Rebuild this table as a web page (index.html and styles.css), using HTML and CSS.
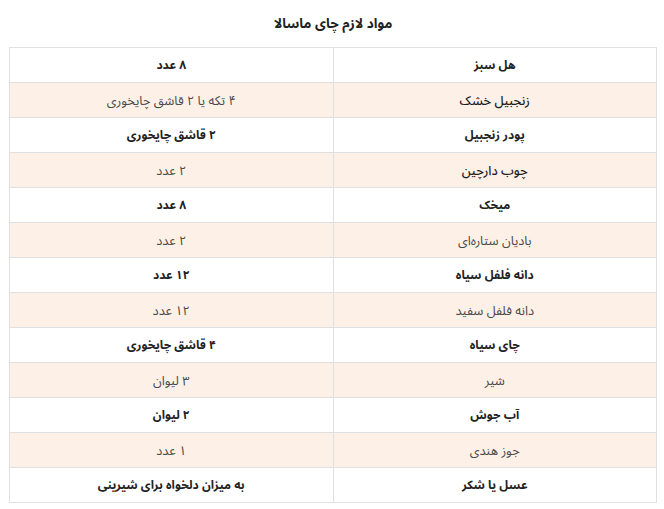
FILE: index.html
```html
<!DOCTYPE html>
<html lang="fa" dir="rtl">
<head>
<meta charset="utf-8">
<link rel="stylesheet" href="styles.css">
</head>
<body>
<div class="wrap">
  <h2 class="title">مواد لازم چای ماسالا</h2>
  <table class="recipe">
    <tbody>
      <tr class="b"><td>هل سبز</td><td>۸ عدد</td></tr>
      <tr class="p"><td class="dk">زنجبیل خشک</td><td>۴ تکه یا ۲ قاشق چایخوری</td></tr>
      <tr class="b"><td>پودر زنجبیل</td><td>۲ قاشق چایخوری</td></tr>
      <tr class="p"><td class="dk">چوب دارچین</td><td>۲ عدد</td></tr>
      <tr class="b"><td>میخک</td><td>۸ عدد</td></tr>
      <tr class="p"><td>بادیان ستاره‌ای</td><td>۲ عدد</td></tr>
      <tr class="b"><td>دانه فلفل سیاه</td><td>۱۲ عدد</td></tr>
      <tr class="p"><td>دانه فلفل سفید</td><td>۱۲ عدد</td></tr>
      <tr class="b"><td>چای سیاه</td><td>۴ قاشق چایخوری</td></tr>
      <tr class="p"><td>شیر</td><td>۳ لیوان</td></tr>
      <tr class="b"><td>آب جوش</td><td>۲ لیوان</td></tr>
      <tr class="p"><td>جوز هندی</td><td>۱ عدد</td></tr>
      <tr class="b"><td>عسل یا شکر</td><td>به میزان دلخواه برای شیرینی</td></tr>
    </tbody>
  </table>
</div>
</body>
</html>
```
FILE: styles.css
```css
html, body {
  margin: 0;
  padding: 0;
  background: #ffffff;
}
body {
  font-family: "Noto Sans Arabic", "DejaVu Sans", sans-serif;
  color: #222222;
}
.wrap {
  padding: 0 7px 0 9px;
}
.title {
  margin: 0;
  height: 47px;
  line-height: 48px;
  font-size: 13.5px;
  font-weight: bold;
  text-align: center;
  color: #222222;
}
.recipe {
  width: 648px;
  border-collapse: collapse;
  table-layout: fixed;
}
.recipe td {
  width: 50%;
  height: 33px;
  padding: 1px 8px 0;
  border: 1px solid #e0e0e0;
  text-align: center;
  vertical-align: middle;
  line-height: 16px;
}
.recipe tr.b td {
  background: #ffffff;
  font-size: 12px;
  font-weight: bold;
  color: #222222;
}
.recipe tr.p td {
  background: #fdf0e6;
  font-size: 12.8px;
  font-weight: normal;
  color: #4a4a4a;
}
.recipe tr.p td.dk {
  color: #1e1e1e;
  font-weight: 500;
}
```
